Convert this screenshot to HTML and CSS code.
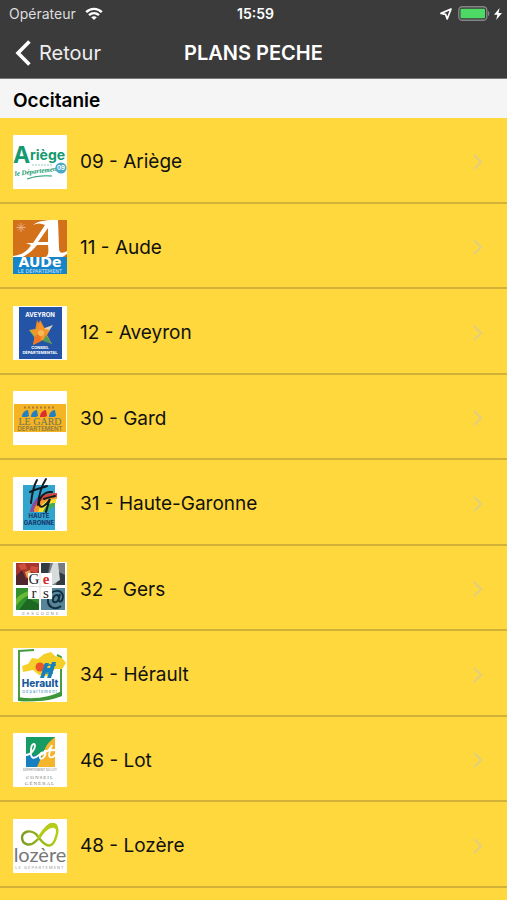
FILE: index.html
```html
<!DOCTYPE html>
<html lang="fr">
<head>
  <meta charset="UTF-8">
  <meta name="viewport" content="width=device-width, initial-scale=1.0">
  <title>Plans pêche</title>
  <link rel="stylesheet" href="styles.css">
</head>
<body>
  <header class="header">
    <div class="status">
      <div class="carrier">
        <span>Opérateur</span>
        <svg width="18" height="14" viewBox="0 0 18 14" fill="none" stroke="#fff" stroke-width="2.4">
          <path d="M1.2 5.2C5.6 .8 12.4 .8 16.8 5.2"/>
          <path d="M4 8.2C7 5.4 11 5.4 14 8.2"/>
          <path d="M9 13L6.2 10.2C7.8 8.8 10.2 8.8 11.8 10.2Z" fill="#fff" stroke="none"/>
        </svg>
      </div>
      <span class="time">15:59</span>
      <div class="battery">
        <svg width="12" height="12" viewBox="0 0 12 12" fill="none" stroke="#fff" stroke-width="1.7" stroke-linejoin="round">
          <path d="M11 1L1 5.4L5.6 6.4L7.2 11Z"/>
        </svg>
        <svg width="32" height="15" viewBox="0 0 32 15">
          <rect x=".8" y=".8" width="28" height="13.4" rx="3.5" fill="none" stroke="#858585" stroke-width="1.4"/>
          <rect x="2.5" y="2.7" width="24.5" height="9.6" rx="1" fill="#4cd964"/>
          <path d="M30 5C31.8 5.6 31.8 9.4 30 10Z" fill="#858585"/>
        </svg>
        <svg width="8" height="12" viewBox="0 0 8 12" fill="#fff">
          <path d="M5.6 0L0 6.8H3.4L2.2 12L8 5H4.5Z"/>
        </svg>
      </div>
    </div>
    <nav class="navbar">
      <a class="back" href="#">
        <svg width="16" height="26" viewBox="0 0 16 26" fill="none" stroke="#fff" stroke-width="3.6">
          <path d="M14.4 1.4L3 13L14.4 24.6"/>
        </svg>
        Retour
      </a>
      <h1 class="title">PLANS PECHE</h1>
    </nav>
  </header>

  <main>
    <h2 class="region">Occitanie</h2>
    <ul class="list">
      <li>
        <a class="row" href="#">
          <svg class="logo" viewBox="0 0 54 54">
            <rect width="54" height="54" fill="#fff"/>
            <g fill="#15996f">
              <text x="0" y="28" font-size="23" font-weight="700">A</text>
              <text x="17" y="25" font-size="14" font-weight="700">riège</text>
              <text class="script" x="2" y="41" font-size="7" font-weight="700" transform="rotate(-7 2 41)">le Département</text>
            </g>
            <path d="M19 30h21" stroke="#9bcdbc" stroke-width="1.2" stroke-dasharray="2 1"/>
            <path d="M14 44Q25 40 39 41" fill="none" stroke="#15996f"/>
            <circle cx="48" cy="33" r="5.6" fill="#4caac6"/>
            <text x="48" y="35" font-size="6" font-weight="700" text-anchor="middle" fill="#fff">09</text>
          </svg>
          <span class="name">09 - Ariège</span>
          <svg class="chevron" viewBox="0 0 10 16"><path d="M1 1L8 8L1 15"/></svg>
        </a>
      </li>
      <li>
        <a class="row" href="#">
          <svg class="logo" viewBox="0 0 54 54">
            <rect width="54" height="54" fill="#d2711a"/>
            <path d="M8 3v9M3.500 7.500h9M5 4.500l6 6M11 4.500l-6 6" stroke="#eab184" stroke-width="1"/>
            <path d="M20 5C27 0 34 0 45 0L46 28C46 33 49 34 54 31V34L48 38H31C35 36 36 34 35 25H24C20 30 15 35 7 38H0V36C8 35 14 32 18 25L13 23H20L32 5C28 3 24 3 20 5Z" fill="#fff"/>
            <path d="M35 8L25 22H35Z" fill="#d2711a"/>
            <rect y="37" width="54" height="17" fill="#1684c8"/>
            <text class="wide" x="27" y="47" font-size="14" font-weight="700" text-anchor="middle" fill="#fff">AUDe</text>
            <text class="wide" x="27" y="53" font-size="5" text-anchor="middle" fill="#cce8fa">LE DÉPARTEMENT</text>
          </svg>
          <span class="name">11 - Aude</span>
          <svg class="chevron" viewBox="0 0 10 16"><path d="M1 1L8 8L1 15"/></svg>
        </a>
      </li>
      <li>
        <a class="row" href="#">
          <svg class="logo" viewBox="0 0 54 54">
            <rect width="54" height="54" fill="#fff"/>
            <rect x="6" y="1" width="43" height="52" fill="#2454a5"/>
            <text x="27" y="11" font-size="6" font-weight="700" text-anchor="middle" fill="#fff">AVEYRON</text>
            <path d="M24 14L29 22L22 25Z" fill="#ed8a2d"/>
            <path d="M29 23L40 19L34 28Z" fill="#ded5b5"/>
            <path d="M16 24L26 23L22 32Z" fill="#9cb83d"/>
            <path d="M27 14L32 23L37 24L34 29L39 38L30 34L20 39L22 29L17 24L24 23Z" fill="#f5942b"/>
            <path d="M33 29L39 38L30 35Z" fill="#4f9c58"/>
            <path d="M22 30L20 39L28 35L27 27Z" fill="#ee7622"/>
            <circle cx="28" cy="27" r="3" fill="#f5bb55"/>
            <g font-size="4" font-weight="700" text-anchor="middle" fill="#fff">
              <text x="27" y="43">CONSEIL</text>
              <text x="27" y="48">DÉPARTEMENTAL</text>
            </g>
          </svg>
          <span class="name">12 - Aveyron</span>
          <svg class="chevron" viewBox="0 0 10 16"><path d="M1 1L8 8L1 15"/></svg>
        </a>
      </li>
      <li>
        <a class="row" href="#">
          <svg class="logo" viewBox="0 0 54 54">
            <rect width="54" height="54" fill="#fff"/>
            <rect x="1" y="13" width="52" height="28" fill="#f4b424"/>
            <path d="M11 16.500h32" stroke="#a87c35" stroke-width="2" stroke-dasharray="2 2"/>
            <g fill="#237fbe">
              <path d="M9 26C9 22 12 19 15 19L16 25L14 26Z"/>
              <path d="M18 26C18 22 21 19 24 19L25 25L23 26Z"/>
              <path d="M36 26C36 22 39 19 42 19L43 25L41 26Z"/>
            </g>
            <path d="M27 26C27 22 30 19 33 19L34 25L32 26Z" fill="#dd2d2e"/>
            <text class="serif" x="27" y="34" font-size="10" text-anchor="middle" fill="#6b7457">LE GARD</text>
            <text x="27" y="40" font-size="6" font-weight="600" text-anchor="middle" fill="#8c7b42">DÉPARTEMENT</text>
          </svg>
          <span class="name">30 - Gard</span>
          <svg class="chevron" viewBox="0 0 10 16"><path d="M1 1L8 8L1 15"/></svg>
        </a>
      </li>
      <li>
        <a class="row" href="#">
          <svg class="logo" viewBox="0 0 54 54">
            <rect width="54" height="54" fill="#fff"/>
            <rect x="10" y="8" width="32" height="45" fill="#32a5cf"/>
            <path d="M17 35C20 22 30 16 44 16V20C33 20 25 26 23 35Z" fill="#d64638"/>
            <path d="M20 35C23 25 31 19 44 20V22C34 22 27 27 26 35Z" fill="#f59a2a"/>
            <path d="M25 35C28 26 34 22 43 22V26C36 26 33 29 31 35Z" fill="#f8df32"/>
            <path d="M30 35C32 29 36 26 42 26V30C38 30 36 32 35 35Z" fill="#47ad54"/>
            <path d="M17 35C18 28 22 22 27 18L28 21C23 25 21 29 21 35Z" fill="#8150a0"/>
            <g fill="none" stroke="#101820" stroke-width="2" stroke-linecap="round">
              <path d="M24 3C21 8 19 17 18 26M33 2C29 8 26 17 25 28M17 15C23 12 29 11 34 9"/>
              <path d="M39 15C31 14 26 21 26 27C27 33 34 28 37 22C35 27 34 31 33 35M31 22C36 20 39 20 42 19"/>
            </g>
            <g font-size="6" font-weight="800" text-anchor="middle" fill="#173e73">
              <text x="26" y="41">HAUTE</text>
              <text x="26" y="48">GARONNE</text>
            </g>
          </svg>
          <span class="name">31 - Haute-Garonne</span>
          <svg class="chevron" viewBox="0 0 10 16"><path d="M1 1L8 8L1 15"/></svg>
        </a>
      </li>
      <li>
        <a class="row" href="#">
          <svg class="logo" viewBox="0 0 54 54">
            <rect width="54" height="54" fill="#fff"/>
            <rect x="3" y="1" width="23" height="22" fill="#a7332e"/>
            <path d="M3 14L9 8L13 17L18 14L15 23H3Z" fill="#51252d"/>
            <path d="M5 3L12 1L14 7L8 8ZM18 4L25 5L24 11L17 9Z" fill="#cc503a"/>
            <path d="M12 10L17 8L18 13L14 16Z" fill="#e5a154"/>
            <rect x="28" y="1" width="24" height="22" fill="#777c80"/>
            <path d="M28 1H37L35 12H28ZM46 10L52 13V23H43Z" fill="#333b42"/>
            <path d="M40 1H45L47 18L39 23L36 13Z" fill="#d8dbdb"/>
            <rect x="3" y="26" width="23" height="22" fill="#30912e"/>
            <path d="M3 37C10 29 18 28 26 28V33C15 31 9 36 3 44Z" fill="#68b935"/>
            <path d="M6 48L15 36L26 42V48Z" fill="#1d6822"/>
            <rect x="28" y="26" width="24" height="22" fill="#56859a"/>
            <path d="M48 44C42 49 34 45 35 37C37 26 51 27 50 35C49 41 45 41 46 36C44 42 39 41 40 37C41 32 46 32 46 36L47 32" fill="none" stroke="#132f40" stroke-width="2"/>
            <path d="M15 11H39V37H15Z" fill="#fff"/>
            <path d="M27 11V37M15 24.500H39" stroke="#ddd"/>
            <g class="serif" font-size="15" text-anchor="middle" fill="#222">
              <text x="21" y="22">G</text>
              <text x="33" y="22" font-weight="700" fill="#d52b30">e</text>
              <text x="21" y="36">r</text>
              <text x="33" y="36">s</text>
            </g>
            <text x="28" y="53" font-size="4" letter-spacing="2" text-anchor="middle" fill="#888">GASCOGNE</text>
          </svg>
          <span class="name">32 - Gers</span>
          <svg class="chevron" viewBox="0 0 10 16"><path d="M1 1L8 8L1 15"/></svg>
        </a>
      </li>
      <li>
        <a class="row" href="#">
          <svg class="logo" viewBox="0 0 54 54">
            <rect width="54" height="54" fill="#fff"/>
            <path d="M21 2L6 3V52C22 53 36 51 48 47V9L44 7" fill="none" stroke="#4a9c40" stroke-width="2"/>
            <path d="M5 49C22 52 37 49 49 43V48C37 53 22 54 5 53Z" fill="#3d9637"/>
            <path d="M9 18L15 16L19 10L25 11L31 6L38 4L42 8L49 10L53 15L49 21L42 21L35 28L26 27L20 22L10 24Z" fill="#f6cf29"/>
            <circle cx="27" cy="19" r="4.500" fill="#e9542b"/>
            <path d="M32 15H36L34 20H37L39 14H43L38 30H34L36 24H33L31 30H27Z" fill="#1680bd"/>
            <path d="M29 25H40M31 17H43" stroke="#1680bd" stroke-width="1.500"/>
            <text x="27" y="39" font-size="10" font-weight="800" text-anchor="middle" fill="#185b9c">Herault</text>
            <text x="27" y="45" font-size="4" letter-spacing="1" text-anchor="middle" fill="#2e85bb">Département</text>
          </svg>
          <span class="name">34 - Hérault</span>
          <svg class="chevron" viewBox="0 0 10 16"><path d="M1 1L8 8L1 15"/></svg>
        </a>
      </li>
      <li>
        <a class="row" href="#">
          <svg class="logo" viewBox="0 0 54 54">
            <rect width="54" height="54" fill="#fff"/>
            <rect x="13" y="4" width="29" height="30" fill="#169b64"/>
            <path d="M13 20L28 24L24 34H13Z" fill="#157fbf"/>
            <path d="M42 4C31 12 32 18 28 25L24 34H42Z" fill="#f4b52c"/>
            <path d="M13 22C18 22 22 16 22 13C22 9 18 11 18 17C17 25 20 27 26 22C30 17 35 19 31 24C28 28 25 24 28 22C32 20 37 17 39 12C36 20 34 26 40 24L42 22M31 18L42 17" fill="none" stroke="#fff" stroke-width="1.800"/>
            <text x="27" y="38" font-size="3" text-anchor="middle" fill="#777">DÉPARTEMENT DU LOT</text>
            <g class="serif" font-size="5" letter-spacing="1" text-anchor="middle" fill="#777">
              <text x="27" y="46">CONSEIL</text>
              <text x="27" y="52">GÉNÉRAL</text>
            </g>
          </svg>
          <span class="name">46 - Lot</span>
          <svg class="chevron" viewBox="0 0 10 16"><path d="M1 1L8 8L1 15"/></svg>
        </a>
      </li>
      <li>
        <a class="row" href="#">
          <svg class="logo" viewBox="0 0 54 54">
            <defs>
              <linearGradient id="loop">
                <stop offset="0" stop-color="#7b9b27"/>
                <stop offset="1" stop-color="#b5cd18"/>
              </linearGradient>
            </defs>
            <rect width="54" height="54" fill="#fff"/>
            <path d="M23 15C16 10 10 13 9 18C9 26 17 28 23 22C29 17 32 7 39 5C46 5 45 14 42 21C38 30 32 28 23 15Z" fill="none" stroke="url(#loop)" stroke-width="2.400"/>
            <path d="M24 19C30 10 34 4 40 4C45 4 45 10 44 13C42 6 36 7 25 21Z" fill="#b5cd18"/>
            <text class="thin" x="27" y="43" font-size="20" text-anchor="middle" fill="#777">lozère</text>
            <text x="27" y="50" font-size="4" letter-spacing="1" text-anchor="middle" fill="#999">LE DÉPARTEMENT</text>
          </svg>
          <span class="name">48 - Lozère</span>
          <svg class="chevron" viewBox="0 0 10 16"><path d="M1 1L8 8L1 15"/></svg>
        </a>
      </li>
    </ul>
  </main>
</body>
</html>
```
FILE: styles.css
```css
* {
  box-sizing: border-box;
}

body {
  margin: 0;
  background-color: #ffd83d;
  color: #111;
  font-family: 'Inter', 'Liberation Sans', sans-serif;
}

a {
  color: inherit;
  text-decoration: none;
}

.header {
  background-color: #3b3b3b;
  color: #fff;
  border-bottom: 1px solid #777;
}

.status {
  display: grid;
  grid-template-columns: 1fr auto 1fr;
  align-items: center;
  height: 27px;
  padding: 0 5px 0 9px;
  font-size: 14px;
}

.carrier {
  display: flex;
  align-items: center;
  gap: 9px;
  color: #ddd;
}

.time {
  font-weight: 600;
}

.battery {
  display: flex;
  align-items: center;
  justify-content: flex-end;
  gap: 6px;
}

.battery svg:last-child {
  margin-left: -2px;
}

.navbar {
  display: grid;
  grid-template-columns: 1fr auto 1fr;
  align-items: center;
  height: 51px;
  padding: 0 15px;
}

.back {
  display: flex;
  align-items: center;
  gap: 8px;
  font-size: 20px;
  color: #eee;
}

.title {
  margin: 0;
  font-size: 20px;
  font-weight: 600;
}

.region {
  margin: 0;
  padding: 0 13px;
  height: 39px;
  line-height: 43px;
  background-color: #f5f5f5;
  color: #000;
  font-size: 19px;
  font-weight: 600;
}

.list {
  display: grid;
  grid-auto-rows: 86px 85px;
  margin: 0;
  padding: 0;
  list-style: none;
}

.row {
  display: flex;
  align-items: center;
  gap: 13px;
  height: 100%;
  padding: 3px 24px 0 13px;
  border-bottom: 2px solid #d1b137;
}

.logo {
  width: 54px;
  height: 54px;
}

.name {
  flex: 1;
  font-size: 19px;
}

.chevron {
  width: 10px;
  height: 16px;
  fill: none;
  stroke: #e0cf80;
  stroke-width: 2;
}

.script {
  font-family: 'Liberation Serif', serif;
  font-style: italic;
}

.wide {
  font-family: 'DejaVu Sans', sans-serif;
}

.serif {
  font-family: 'Liberation Serif', serif;
}

.thin {
  font-family: 'Lato', sans-serif;
}
```
